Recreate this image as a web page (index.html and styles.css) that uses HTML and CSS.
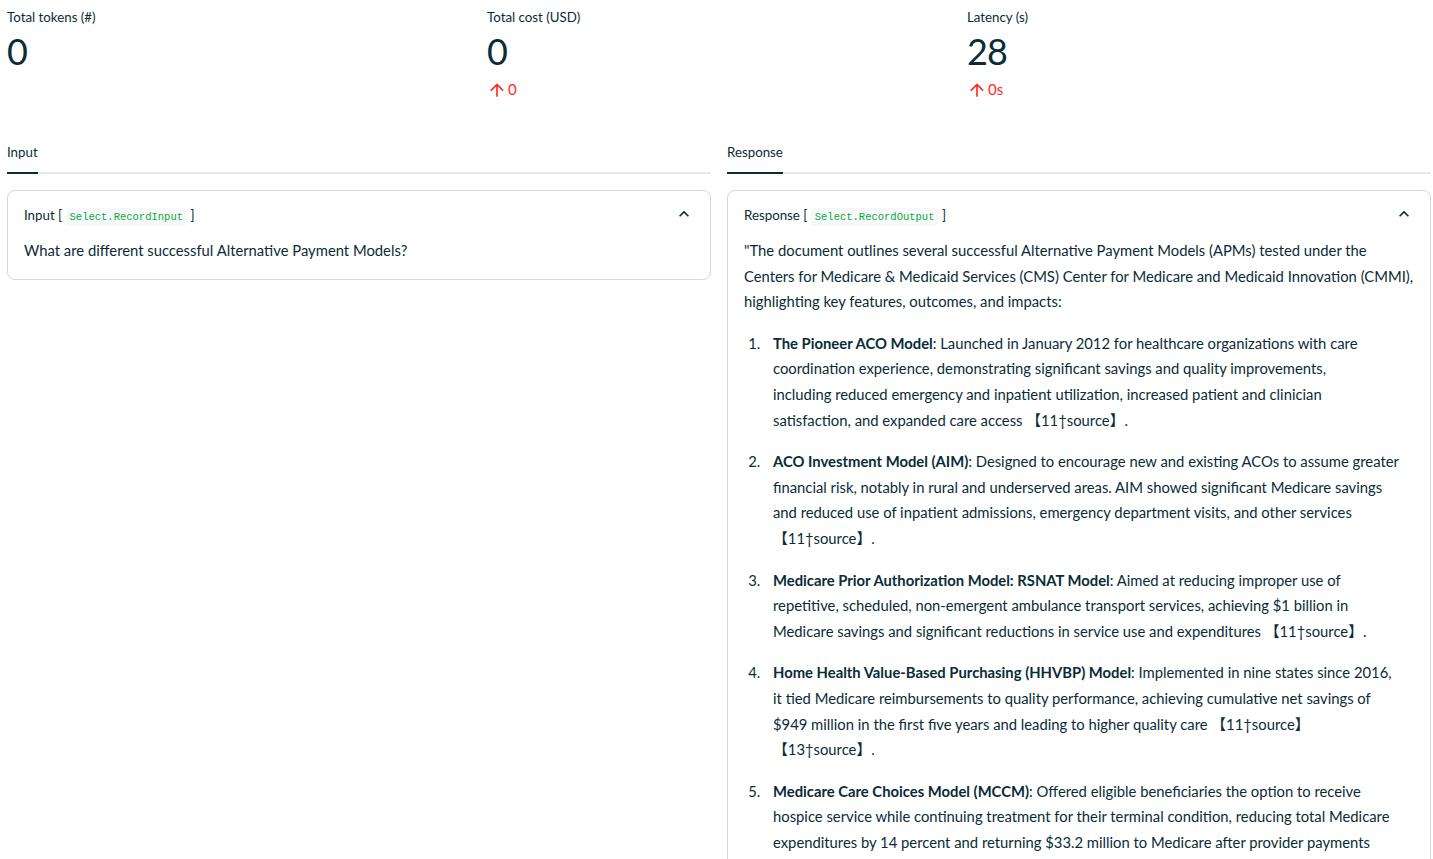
FILE: index.html
```html
<!DOCTYPE html>
<html lang="en">
<head>
<meta charset="utf-8">
<title>Record</title>
<link rel="stylesheet" href="styles.css">
</head>
<body>
<div class="page">
  <div class="metrics">
    <div class="metric">
      <div class="metric-label">Total tokens (#)</div>
      <div class="metric-value">0</div>
    </div>
    <div class="metric">
      <div class="metric-label">Total cost (USD)</div>
      <div class="metric-value">0</div>
      <div class="metric-delta"><svg class="delta-icon" viewBox="0 0 24 24"><path d="M4 12l1.41 1.41L11 7.83V20h2V7.83l5.58 5.59L20 12l-8-8-8 8z"/></svg><span>0</span></div>
    </div>
    <div class="metric">
      <div class="metric-label">Latency (s)</div>
      <div class="metric-value">28</div>
      <div class="metric-delta"><svg class="delta-icon" viewBox="0 0 24 24"><path d="M4 12l1.41 1.41L11 7.83V20h2V7.83l5.58 5.59L20 12l-8-8-8 8z"/></svg><span>0s</span></div>
    </div>
  </div>

  <div class="columns">
    <div class="column">
      <div class="tabs"><div class="tab active">Input</div></div>
      <div class="card">
        <div class="card-header">
          <div class="card-title">Input [ <code class="chip">Select.RecordInput</code> ]</div>
          <svg class="chevron" viewBox="0 0 24 24"><path d="M12 8l-6 6 1.41 1.41L12 10.83l4.59 4.58L18 14z"/></svg>
        </div>
        <div class="card-body">
          <p>What are different successful Alternative Payment Models?</p>
        </div>
      </div>
    </div>
    <div class="column">
      <div class="tabs"><div class="tab active">Response</div></div>
      <div class="card open">
        <div class="card-header">
          <div class="card-title">Response [ <code class="chip">Select.RecordOutput</code> ]</div>
          <svg class="chevron" viewBox="0 0 24 24"><path d="M12 8l-6 6 1.41 1.41L12 10.83l4.59 4.58L18 14z"/></svg>
        </div>
        <div class="card-body">
          <p>"The document outlines several successful Alternative Payment Models (APMs) tested under the<br>Centers for Medicare &amp; Medicaid Services (CMS) Center for Medicare and Medicaid Innovation (CMMI),<br>highlighting key features, outcomes, and impacts:</p>
          <ol>
            <li><strong>The Pioneer ACO Model</strong>: Launched in January 2012 for healthcare organizations with care<br>coordination experience, demonstrating significant savings and quality improvements,<br>including reduced emergency and inpatient utilization, increased patient and clinician<br>satisfaction, and expanded care access 【11†source】.</li>
            <li><strong>ACO Investment Model (AIM)</strong>: Designed to encourage new and existing ACOs to assume greater<br>financial risk, notably in rural and underserved areas. AIM showed significant Medicare savings<br>and reduced use of inpatient admissions, emergency department visits, and other services<br>【11†source】.</li>
            <li><strong>Medicare Prior Authorization Model: RSNAT Model</strong>: Aimed at reducing improper use of<br>repetitive, scheduled, non-emergent ambulance transport services, achieving $1 billion in<br>Medicare savings and significant reductions in service use and expenditures 【11†source】.</li>
            <li><strong>Home Health Value-Based Purchasing (HHVBP) Model</strong>: Implemented in nine states since 2016,<br>it tied Medicare reimbursements to quality performance, achieving cumulative net savings of<br>$949 million in the first five years and leading to higher quality care 【11†source】<br>【13†source】.</li>
            <li><strong>Medicare Care Choices Model (MCCM)</strong>: Offered eligible beneficiaries the option to receive<br>hospice service while continuing treatment for their terminal condition, reducing total Medicare<br>expenditures by 14 percent and returning $33.2 million to Medicare after provider payments<br>and saving costs for patients through fewer hospital stays 【11†source】.</li>
          </ol>
        </div>
      </div>
    </div>
  </div>
</div>
</body>
</html>
```

FILE: styles.css
```css
html, body {
  margin: 0;
  padding: 0;
  background: #ffffff;
}

body {
  font-family: "Lato", "Noto Sans CJK JP", sans-serif;
  color: #0a2c37;
  font-size: 14.8px;
  line-height: 25.6px;
  overflow: hidden;
  height: 859px;
}

.page {
  width: 1424px;
  padding: 6px 0 0 7px;
}

.metrics {
  display: grid;
  grid-template-columns: repeat(3, 1fr);
  gap: 16px;
}

.metric-label {
  font-size: 13.3px;
  line-height: 22px;
}

.metric-value {
  font-size: 36px;
  line-height: 47px;
  letter-spacing: -1px;
}

.metric-delta {
  display: flex;
  align-items: center;
  gap: 1px;
  color: #ff2b2b;
  font-size: 15px;
  line-height: 25px;
  margin-top: 2px;
}

.delta-icon {
  width: 20px;
  height: 20px;
  fill: #ff2b2b;
}

.columns {
  display: grid;
  grid-template-columns: 1fr 1fr;
  gap: 16px;
  margin-top: 30px;
}

.tabs {
  display: flex;
  height: 42px;
  border-bottom: 2px solid #e6e9ee;
  box-sizing: border-box;
}

.tab {
  font-size: 13.3px;
  display: flex;
  align-items: center;
  height: 40px;
  box-sizing: border-box;
  padding-top: 2px;
}

.tab.active {
  border-bottom: 2px solid #0a2c37;
  height: 42px;
  margin-bottom: -2px;
}

.card {
  margin-top: 16px;
  border: 1px solid #d6d8dc;
  border-radius: 8px;
}

.card.open {
  height: 900px;
}

.card-header {
  display: flex;
  align-items: center;
  justify-content: space-between;
  padding: 13px 16px 10px;
}

.card-title {
  font-size: 13.3px;
  line-height: 22px;
}

.chip {
  font-family: "Liberation Mono", monospace;
  font-size: 10.5px;
  color: #09ab3b;
  background: #f7f8fa;
  padding: 3px 4px;
  border-radius: 4px;
}

.chevron {
  width: 20px;
  height: 20px;
  fill: #0a2c37;
  margin-top: -4px;
}

.card-body {
  padding: 0 12px 15px 16px;
}

.card-body p {
  margin: 0;
}

.card-body > p:not(:last-child) {
  margin-bottom: 16px;
}

ol {
  margin: 0;
  padding-left: 20px;
}

ol li {
  margin-bottom: 16px;
  padding-left: 9px;
}

strong {
  font-weight: 700;
}
```
